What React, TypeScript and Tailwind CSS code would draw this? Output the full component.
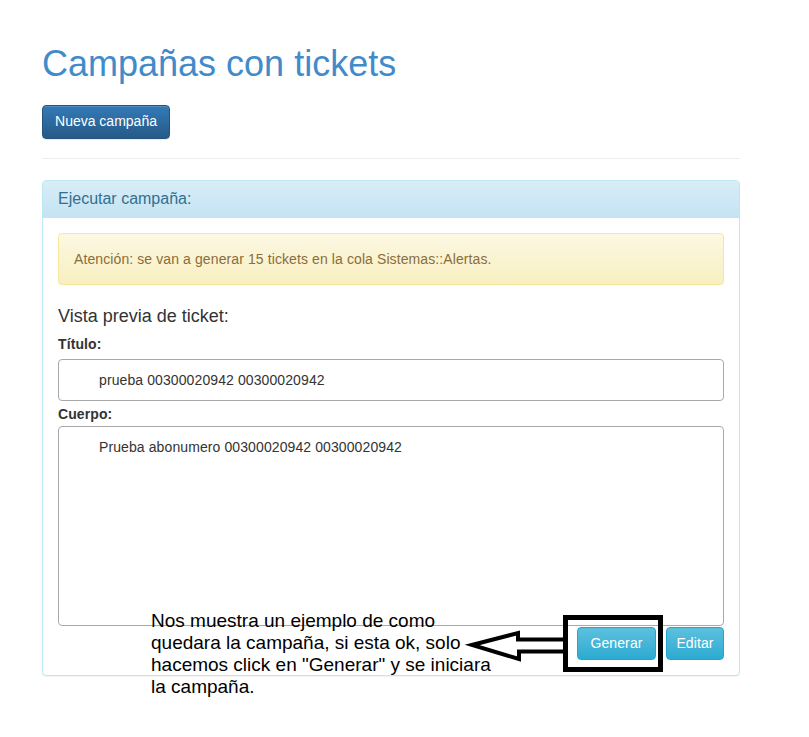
export default function App() {
  return (
    <div className="relative w-[809px] min-h-[737px] bg-white font-['Liberation_Sans',Arial,sans-serif] text-[#333] text-[14px]">
      <div className="ml-[42px] w-[698px] pt-[44px]">
        <h1 className="text-[36px] leading-[1.1] text-[#428bca]">Campañas con tickets</h1>
        <button className="mt-[21px] h-[34px] w-[128px] rounded-[4px] border border-[#245580] bg-gradient-to-b from-[#337ab7] to-[#265a88] text-[14px] text-white shadow-[inset_0_1px_0_rgba(255,255,255,0.15),0_1px_1px_rgba(0,0,0,0.075)]">
          Nueva campaña
        </button>
        <hr className="mt-[19px] border-0 border-t border-[#eee]" />
        <Panel />
      </div>
      <Annotation />
    </div>
  );
}

function Panel() {
  return (
    <section className="mt-[21px] rounded-[4px] border border-[#bce8f1] bg-white shadow-[0_1px_1px_rgba(0,0,0,0.05)]">
      <div className="flex h-[37px] items-center rounded-t-[3px] border-b border-[#bce8f1] bg-gradient-to-b from-[#d9edf7] to-[#c4e3f3] px-[15px] text-[16px] text-[#31708f]">
        Ejecutar campaña:
      </div>
      <div className="p-[15px] tracking-[0.1px]">
        <div className="rounded-[4px] border border-[#f5e79e] bg-gradient-to-b from-[#fcf8e3] to-[#f8efc0] p-[15px] leading-[20px] text-[#8a6d3b]">
          Atención: se van a generar 15 tickets en la cola Sistemas::Alertas.
        </div>
        <h4 className="mt-[21px] text-[18px] leading-[20px] tracking-normal">Vista previa de ticket:</h4>
        <label className="mt-[8px] mb-[5px] block font-bold leading-[20px]">Título:</label>
        <div className="flex h-[42px] items-center rounded-[4px] border border-[#a9a9a9] pl-[40px] leading-[20px]">
          prueba 00300020942 00300020942
        </div>
        <label className="mt-[3px] mb-[2px] block font-bold leading-[20px]">Cuerpo:</label>
        <div className="h-[200px] rounded-[4px] border border-[#a9a9a9] pl-[40px] pt-[10px] leading-[20px]">
          Prueba abonumero 00300020942 00300020942
        </div>
        <div className="mt-[1px] flex justify-end gap-[10px]">
          <button className="h-[33px] w-[79px] rounded-[4px] border border-[#28a4c9] bg-gradient-to-b from-[#5bc0de] to-[#2aabd2] text-white">
            Generar
          </button>
          <button className="h-[33px] w-[58px] rounded-[4px] border border-[#28a4c9] bg-gradient-to-b from-[#5bc0de] to-[#2aabd2] text-white">
            Editar
          </button>
        </div>
      </div>
    </section>
  );
}

function Annotation() {
  return (
    <>
      <div className="absolute left-[151px] top-[610px] whitespace-nowrap text-[19px] leading-[22px] text-black">
        <div>Nos muestra un ejemplo de como</div>
        <div>quedara la campaña, si esta ok, solo</div>
        <div>hacemos click en "Generar" y se iniciara</div>
        <div>la campaña.</div>
      </div>
      <svg className="absolute left-[460px] top-[610px]" width="210" height="70" viewBox="0 0 210 70">
        <rect x="105.5" y="7.5" width="95" height="52" fill="none" stroke="black" strokeWidth="5" />
        <path d="M103 29.5 H58 V23 L12 35 L59 49 V41.5 H103" fill="none" stroke="black" strokeWidth="4" strokeLinejoin="miter" />
      </svg>
    </>
  );
}
